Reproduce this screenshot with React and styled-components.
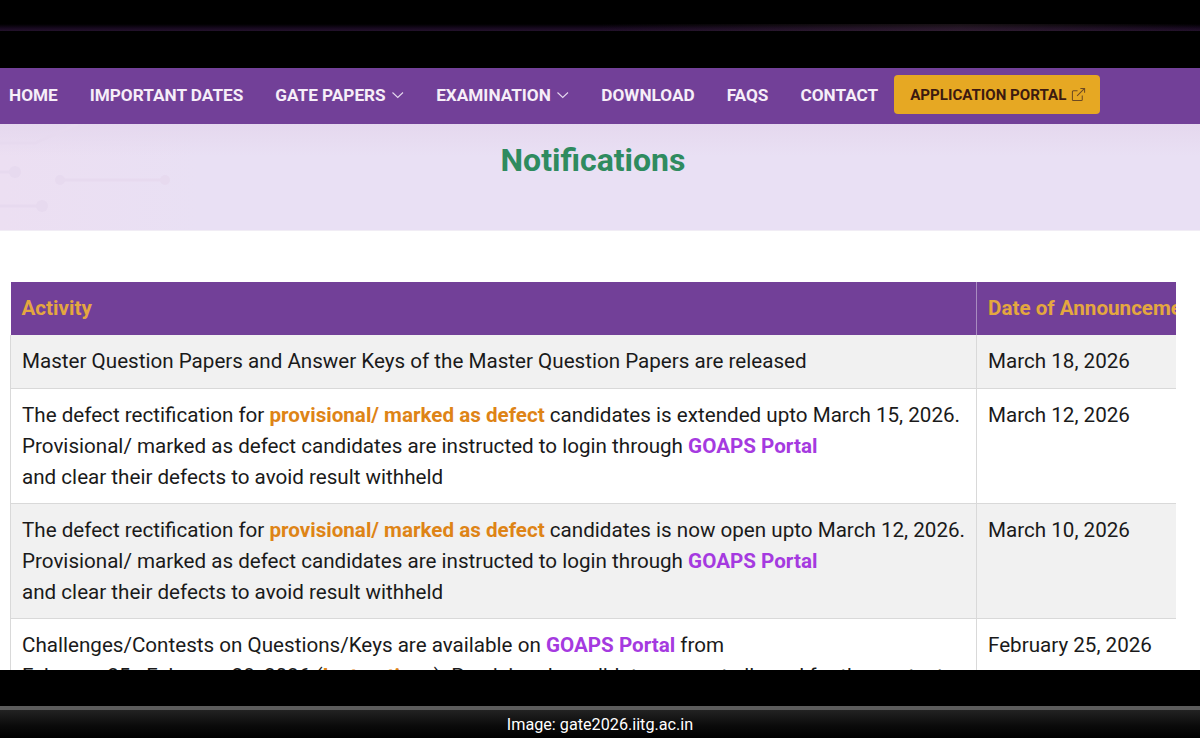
import React from 'react';
import styled, { createGlobalStyle } from 'styled-components';

const Global = createGlobalStyle`
  html, body { margin: 0; padding: 0; background: #000; }
  body { font-family: Roboto, "Liberation Sans", sans-serif; }
`;

const Page = styled.div`
  width: 1200px;
  height: 738px;
  overflow: hidden;
  display: flex;
  flex-direction: column;
  background: #000;
`;

const TopBand = styled.div`
  height: 68px;
  flex: none;
  padding-top: 24px;
  box-sizing: border-box;
`;

const TopGlow = styled.div`
  height: 7px;
  background:
    linear-gradient(90deg, transparent 50%, rgba(70, 50, 60, 0.35) 80%, transparent 100%),
    linear-gradient(180deg, #000 0%, #17091f 60%, #23122b 100%);
`;

const Screen = styled.div`
  height: 602px;
  flex: none;
  overflow: hidden;
  background: #fff;
`;

const Nav = styled.nav`
  height: 56px;
  box-sizing: border-box;
  padding: 0 0 3px 9px;
  background: #724098;
  display: flex;
  align-items: center;
  gap: 32px;
`;

const NavItem = styled.a`
  display: flex;
  align-items: center;
  gap: 5px;
  color: #f6eef8;
  font-size: 17.2px;
  font-weight: 700;
  white-space: nowrap;
`;

const PortalButton = styled.a`
  display: flex;
  align-items: center;
  gap: 5px;
  margin-left: -16px;
  height: 39px;
  padding: 0 14px 0 16px;
  border-radius: 4px;
  background: #e6a823;
  color: #3c1a10;
  font-size: 15.1px;
  font-weight: 700;
  white-space: nowrap;
`;

const Hero = styled.header`
  height: 106px;
  position: relative;
  overflow: hidden;
  background:
    linear-gradient(180deg, #e5d8ee 0%, rgba(233, 224, 244, 0) 30%),
    linear-gradient(90deg, #ecdff2 0%, #e9e0f4 200px);
  background-color: #e9e0f4;
  border-bottom: 1px solid #f1edf5;
  text-align: center;
`;

const HeroArt = styled.svg`
  position: absolute;
  left: 0;
  top: 0;
`;

const Title = styled.h1`
  position: relative;
  margin: 0;
  padding: 16px 14px 0 0;
  font-size: 32px;
  line-height: 40px;
  font-weight: 700;
  color: #2f8b5f;
`;

const TableWrap = styled.div`
  margin: 51px 0 0 10px;
  width: 1166px;
  overflow: hidden;
`;

const Table = styled.table`
  width: 1266px;
  table-layout: fixed;
  border-collapse: collapse;
  font-size: 20.62px;
  line-height: 31px;
  color: #1a1a1a;
  tbody tr:first-child td { padding-bottom: 11px; }
`;

const HeadCell = styled.th`
  height: 53px;
  padding: 0 11px;
  box-sizing: border-box;
  background: #724098;
  color: #e4a73f;
  font-size: 20.62px;
  font-weight: 700;
  text-align: left;
  white-space: nowrap;
  border-left: 1px solid #a98cc0;
  &:first-child { border-left: 0; }
`;

const Row = styled.tr`
  background: ${(p) => (p.$shaded ? '#f1f1f1' : '#fff')};
`;

const Cell = styled.td`
  padding: 11px 11px 10px;
  vertical-align: top;
  white-space: nowrap;
  border: 1px solid #d9d9d9;
  border-top: 0;
`;

const Warn = styled.a`
  color: #de8416;
  font-weight: 700;
`;

const Portal = styled.a`
  color: #a53ae0;
  font-weight: 700;
`;

const BottomBand = styled.footer`
  height: 68px;
  flex: none;
  padding-top: 36px;
  box-sizing: border-box;
  display: flex;
  flex-direction: column;
`;

const CaptionBar = styled.div`
  flex: 1;
  border-top: 4px solid #5c5c5c;
  background: linear-gradient(180deg, #222 0%, #0b0b0b 55%, #000 100%);
  display: flex;
  align-items: center;
  justify-content: center;
  color: #fff;
  font-size: 16.2px;
`;

const Chevron = () => (
  <svg width="13.5" height="14" viewBox="0 0 13.5 14" fill="none" stroke="#e6d9ee" strokeWidth="1.1">
    <path d="M1.5 4.5 6.75 9.5 12 4.5" />
  </svg>
);

const ExternalLink = () => (
  <svg width="15" height="15" viewBox="0 0 16 16" fill="none" stroke="#6e4a22" strokeWidth="1.1">
    <path d="M12 9v4.5a1 1 0 0 1-1 1H2.5a1 1 0 0 1-1-1V5a1 1 0 0 1 1-1H7" />
    <path d="M6.5 9.5 14.5 1.5M10 1.5h4.5V6" />
  </svg>
);

const navLinks = [
  { label: 'HOME' },
  { label: 'IMPORTANT DATES' },
  { label: 'GATE PAPERS', menu: true },
  { label: 'EXAMINATION', menu: true },
  { label: 'DOWNLOAD' },
  { label: 'FAQS' },
  { label: 'CONTACT' },
];

export default function App() {
  return (
    <Page>
      <Global />
      <TopBand>
        <TopGlow />
      </TopBand>
      <Screen>
        <Nav>
          {navLinks.map((link) => (
            <NavItem key={link.label}>
              {link.label}
              {link.menu && <Chevron />}
            </NavItem>
          ))}
          <PortalButton>
            APPLICATION PORTAL
            <ExternalLink />
          </PortalButton>
        </Nav>
        <Hero>
          <HeroArt width="200" height="106" viewBox="0 0 200 106" fill="none" stroke="#e7daef" strokeWidth="3">
            <path d="M0 19H35L78 0" />
            <path d="M0 48H15M60 56H165M0 82H42" />
            <g fill="#e7daef" stroke="none">
              <circle cx="15" cy="48" r="6" />
              <circle cx="60" cy="56" r="5" />
              <circle cx="165" cy="56" r="5" />
              <circle cx="42" cy="82" r="6" />
            </g>
          </HeroArt>
          <Title>Notifications</Title>
        </Hero>
        <TableWrap>
          <Table>
            <colgroup>
              <col style={{ width: 966 }} />
              <col />
            </colgroup>
            <thead>
              <tr>
                <HeadCell>Activity</HeadCell>
                <HeadCell>Date of Announcement</HeadCell>
              </tr>
            </thead>
            <tbody>
              <Row $shaded>
                <Cell>Master Question Papers and Answer Keys of the Master Question Papers are released</Cell>
                <Cell>March 18, 2026</Cell>
              </Row>
              <Row>
                <Cell>
                  The defect rectification for <Warn>provisional/ marked as defect</Warn> candidates is extended upto March 15, 2026.
                  <br />
                  Provisional/ marked as defect candidates are instructed to login through <Portal>GOAPS Portal</Portal>
                  <br />
                  and clear their defects to avoid result withheld
                </Cell>
                <Cell>March 12, 2026</Cell>
              </Row>
              <Row $shaded>
                <Cell>
                  The defect rectification for <Warn>provisional/ marked as defect</Warn> candidates is now open upto March 12, 2026.
                  <br />
                  Provisional/ marked as defect candidates are instructed to login through <Portal>GOAPS Portal</Portal>
                  <br />
                  and clear their defects to avoid result withheld
                </Cell>
                <Cell>March 10, 2026</Cell>
              </Row>
              <Row>
                <Cell>
                  Challenges/Contests on Questions/Keys are available on <Portal>GOAPS Portal</Portal> from
                  <br />
                  February 25 - February 28, 2026 (<Warn>Instructions</Warn>). Provisional candidates are not allowed for the contest
                </Cell>
                <Cell>February 25, 2026</Cell>
              </Row>
            </tbody>
          </Table>
        </TableWrap>
      </Screen>
      <BottomBand>
        <CaptionBar>Image: gate2026.iitg.ac.in</CaptionBar>
      </BottomBand>
    </Page>
  );
}
